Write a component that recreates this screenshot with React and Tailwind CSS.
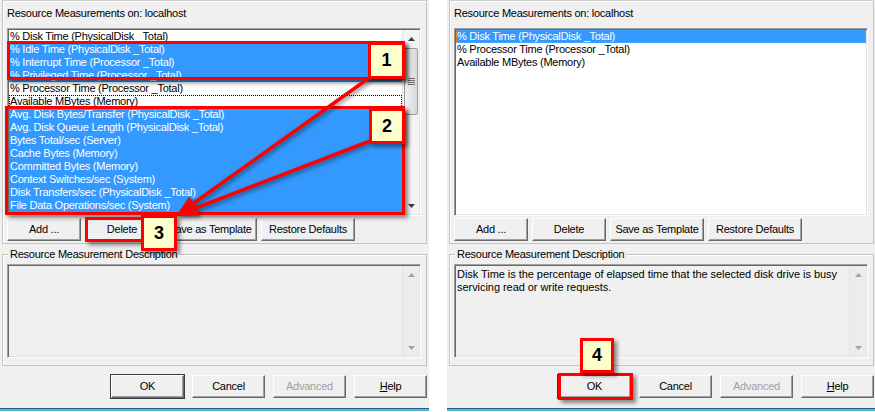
import React from 'react';

const leftRows = [
  { t: '% Disk Time (PhysicalDisk _Total)' },
  { t: '% Idle Time (PhysicalDisk _Total)', sel: true },
  { t: '% Interrupt Time (Processor _Total)', sel: true },
  { t: '% Privileged Time (Processor _Total)', sel: true },
  { t: '% Processor Time (Processor _Total)' },
  { t: 'Available MBytes (Memory)', focus: true },
  { t: 'Avg. Disk Bytes/Transfer (PhysicalDisk _Total)', sel: true },
  { t: 'Avg. Disk Queue Length (PhysicalDisk _Total)', sel: true },
  { t: 'Bytes Total/sec (Server)', sel: true },
  { t: 'Cache Bytes (Memory)', sel: true },
  { t: 'Committed Bytes (Memory)', sel: true },
  { t: 'Context Switches/sec (System)', sel: true },
  { t: 'Disk Transfers/sec (PhysicalDisk _Total)', sel: true },
  { t: 'File Data Operations/sec (System)', sel: true },
];

const rightRows = [
  { t: '% Disk Time (PhysicalDisk _Total)', sel: true, focusSel: true },
  { t: '% Processor Time (Processor _Total)' },
  { t: 'Available MBytes (Memory)' },
];

function Tri({ up, gray }) {
  return (
    <svg width="7" height="4" viewBox="0 0 7 4" className="block">
      <polygon points={up ? '0,4 3.5,0 7,4' : '0,0 3.5,4 7,0'} fill={gray ? '#a3a3a3' : '#3c3c3c'} />
    </svg>
  );
}

function ListScroll() {
  return (
    <div className="w-[17px] h-full bg-[#f4f4f4] border-l border-[#e6e6e6] flex flex-col items-center">
      <div className="h-[17px] w-full flex items-center justify-center"><Tri up /></div>
      <div className="mt-[1px] w-[14px] h-[67px] rounded-[2px] border border-[#9b9b9b] bg-gradient-to-r from-[#f2f2f2] to-[#d9d9d9] flex flex-col items-center justify-center gap-[1px]">
        <div className="w-[7px] h-[1px] bg-[#6e6e6e]" />
        <div className="w-[7px] h-[1px] bg-[#6e6e6e]" />
        <div className="w-[7px] h-[1px] bg-[#6e6e6e]" />
        <div className="w-[7px] h-[1px] bg-[#6e6e6e]" />
      </div>
      <div className="flex-1" />
      <div className="h-[17px] w-full flex items-center justify-center"><Tri /></div>
    </div>
  );
}

function DescScroll() {
  return (
    <div className="w-[17px] h-full bg-[#ececec] border-l border-[#e2e2e2] flex flex-col items-center">
      <div className="h-[17px] w-full flex items-center justify-center"><Tri up gray /></div>
      <div className="flex-1" />
      <div className="h-[17px] w-full flex items-center justify-center"><Tri gray /></div>
    </div>
  );
}

function Btn({ children, w, def, disabled }) {
  return (
    <div
      className={`h-[23px] ${w} flex items-center justify-center bg-[#f0f0f0] border border-t-white border-l-white border-r-[#696969] border-b-[#696969] shadow-[inset_-1px_-1px_0_#a0a0a0] ${def ? 'outline outline-1 outline-[#3c3c3c]' : ''} ${disabled ? 'text-[#a0a0a0]' : 'text-black'}`}
    >
      {children}
    </div>
  );
}

function Sunken({ className, children }) {
  return (
    <div className={`border border-t-[#a0a0a0] border-l-[#a0a0a0] border-r-white border-b-white shadow-[inset_1px_1px_0_#696969,inset_-1px_-1px_0_#e3e3e3] p-[1px] ${className}`}>
      {children}
    </div>
  );
}

function Panel({ rows, scroll, desc, w }) {
  return (
    <div className={`${w} h-full flex flex-col bg-white`}>
      <div className="h-[408px] bg-[#f0f0f0] pl-[2px] flex flex-col">
        <div className="w-[425px] h-[244px] border border-t-[#cfcfcf] border-[#c4c4c4] shadow-[inset_1px_1px_0_#fff] pt-[6px] pl-[4px] flex flex-col">
          <div className="h-[13px] leading-[13px]">Resource Measurements on: localhost</div>
          <Sunken className="mt-[8px] w-[414px] h-[188px] bg-white flex">
            <div className="flex-1 min-w-0 overflow-hidden">
              {rows.map((r) => (
                <div
                  key={r.t}
                  className={`h-[13px] leading-[13px] pl-[1px] whitespace-nowrap ${r.sel ? 'bg-[#3399ff] text-white' : 'text-black'} ${r.focus ? 'outline outline-1 outline-dotted -outline-offset-1 outline-black' : ''} ${r.focusSel ? 'outline outline-1 outline-dotted -outline-offset-1 outline-[#e08a3c]' : ''}`}
                >
                  {r.t}
                </div>
              ))}
            </div>
            {scroll && <ListScroll />}
          </Sunken>
          <div className="mt-[2px] flex gap-[4px]">
            <Btn w="w-[74px]">Add ...</Btn>
            <Btn w="w-[74px]">Delete</Btn>
            <Btn w="w-[94px]">Save as Template</Btn>
            <Btn w="w-[94px]">Restore Defaults</Btn>
          </div>
        </div>

        <div className="relative mt-[10px] w-[425px] h-[112px] border border-[#c4c4c4] shadow-[inset_1px_1px_0_#fff] pl-[4px] pt-[9px]">
          <div className="absolute -top-[7px] left-[5px] px-[2px] h-[13px] leading-[13px] bg-[#f0f0f0]">
            Resource Measurement Description
          </div>
          <Sunken className="w-[414px] h-[94px] bg-[#f0f0f0] flex">
            <div className="flex-1 pl-[1px] pt-[2px] leading-[13px] tracking-[-0.05px]">
              {desc.map((l) => (
                <div key={l} className="h-[13px] whitespace-nowrap">{l}</div>
              ))}
            </div>
            <DescScroll />
          </Sunken>
        </div>

        <div className="mt-[9px] w-[425px] flex justify-end gap-[8px]">
          <Btn w="w-[73px]" def>OK</Btn>
          <Btn w="w-[73px]">Cancel</Btn>
          <Btn w="w-[73px]" disabled>Advanced</Btn>
          <Btn w="w-[73px]"><span className="underline">H</span>elp</Btn>
        </div>
      </div>
      <div className="h-[1px] bg-[#2a5f82]" />
      <div className="h-[2px] bg-[#45b8e6]" />
    </div>
  );
}

function Callout({ n, className }) {
  return (
    <div className={`absolute bg-[#ffffcc] border-[3px] border-[#ff0000] shadow-[3px_3px_4px_rgba(0,0,0,0.45)] flex items-center justify-center text-[18px] font-bold text-black ${className}`}>
      {n}
    </div>
  );
}

export default function App() {
  return (
    <div className="relative w-[875px] h-[412px] bg-white flex overflow-hidden font-['Liberation_Sans',Arial,sans-serif] text-[11px] tracking-[-0.25px] text-black">
      <Panel w="w-[429px]" rows={leftRows} scroll desc={[]} />
      <div className="w-[18px] h-full bg-white" />
      <Panel
        w="w-[428px]"
        rows={rightRows}
        desc={[
          'Disk Time is the percentage of elapsed time that the selected disk drive is busy',
          'servicing read or write requests.',
        ]}
      />

      {/* annotation rectangles */}
      <div className="absolute left-[7px] top-[41px] w-[398px] h-[39px] border-[3px] border-[#ff0000] shadow-[3px_3px_4px_rgba(0,0,0,0.45)]" />
      <div className="absolute left-[5px] top-[106px] w-[400px] h-[109px] border-[3px] border-[#ff0000] shadow-[3px_3px_4px_rgba(0,0,0,0.45)]" />
      <div className="absolute left-[85px] top-[217px] w-[60px] h-[25px] border-[3px] border-[#ff0000] shadow-[3px_3px_4px_rgba(0,0,0,0.45)]" />
      <div className="absolute left-[558px] top-[373px] w-[75px] h-[27px] border-[3px] border-[#ff0000] shadow-[3px_3px_4px_rgba(0,0,0,0.45)]" />

      <svg width="875" height="412" className="absolute left-0 top-0 pointer-events-none drop-shadow-[2px_2px_2px_rgba(0,0,0,0.45)]">
        <line x1="369" y1="78" x2="194" y2="203" stroke="#ff0000" strokeWidth="3.5" />
        <polygon points="176,216 198.5,209.7 189.2,196.7" fill="#ff0000" />
        <line x1="370" y1="141" x2="196" y2="208" stroke="#ff0000" strokeWidth="3.5" />
        <polygon points="176,216 199.4,215.4 193.6,200.5" fill="#ff0000" />
      </svg>

      <Callout n="1" className="left-[368px] top-[42px] w-[37px] h-[37px]" />
      <Callout n="2" className="left-[369px] top-[108px] w-[36px] h-[36px]" />
      <Callout n="3" className="left-[141px] top-[215px] w-[36px] h-[36px]" />
      <Callout n="4" className="left-[580px] top-[338px] w-[34px] h-[35px]" />
    </div>
  );
}
